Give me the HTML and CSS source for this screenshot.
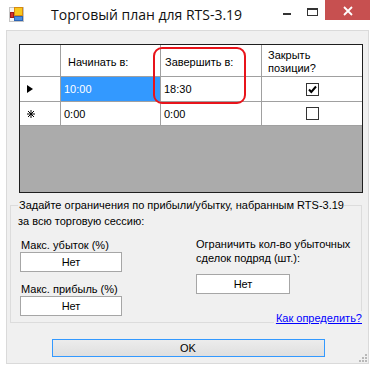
FILE: index.html
```html
<!DOCTYPE html>
<html lang="ru">
<head>
<meta charset="utf-8">
<title>Торговый план для RTS-3.19</title>
<link rel="stylesheet" href="styles.css">
</head>
<body>
<div class="window">
  <div class="titlebar">
    <svg class="app-icon" width="16" height="16" viewBox="0 0 16 16">
      <rect x="0.5" y="0.5" width="14" height="14" fill="#f4f4f4" stroke="#c4c4c4"/>
      <rect x="5.5" y="0.5" width="8" height="8" fill="#f7c81e" stroke="#d88a10"/>
      <rect x="1.5" y="5.5" width="3" height="5" fill="#d6302a" stroke="#9c1c18"/>
      <rect x="5.5" y="9.5" width="8" height="4" fill="#4b8ee0" stroke="#2c64b4"/>
    </svg>
    <span class="title">Торговый план для RTS-3.19</span>
    <div class="caption">
      <span class="cap-btn cap-min"><span class="min-glyph"></span></span>
      <span class="cap-btn cap-max"><span class="max-glyph"></span></span>
      <span class="cap-btn cap-close">
        <svg width="10" height="10" viewBox="0 0 10 10"><path d="M1 1 L9 9 M9 1 L1 9" stroke="#fff" stroke-width="1.8"/></svg>
      </span>
    </div>
  </div>
  <div class="client">
    <div class="grid">
      <div class="cell head rowhead"></div>
      <div class="cell head c1">Начинать в:</div>
      <div class="cell head c2">Завершить в:</div>
      <div class="cell head c3">Закрыть<br>позиции?</div>

      <div class="cell rowhead">
        <svg width="6" height="8" viewBox="0 0 6 8"><path d="M0 0 L6 4 L0 8 Z" fill="#000"/></svg>
      </div>
      <div class="cell data selected">10:00</div>
      <div class="cell data">18:30</div>
      <div class="cell check"><span class="checkbox checked">
        <svg width="11" height="11" viewBox="0 0 11 11"><path d="M2 5.5 L4.3 8 L9 2.5" fill="none" stroke="#000" stroke-width="2"/></svg>
      </span></div>

      <div class="cell rowhead">
        <svg width="8" height="8" viewBox="0 0 8 8"><path d="M4 0 V8 M0 4 H8 M1 1 L7 7 M7 1 L1 7" stroke="#000" stroke-width="1"/></svg>
      </div>
      <div class="cell data">0:00</div>
      <div class="cell data">0:00</div>
      <div class="cell check"><span class="checkbox"></span></div>

      <div class="empty"></div>
      <div class="highlight"></div>
    </div>

    <div class="group">
      <p class="group-title"><span>Задайте ограничения по прибыли/убытку, набранным RTS-3.19<br>за всю торговую сессию:</span></p>
      <div class="group-body">
        <div class="col-left">
          <div class="label">Макс. убыток (%)</div>
          <div class="textbox wide">Нет</div>
          <div class="label second">Макс. прибыль (%)</div>
          <div class="textbox wide">Нет</div>
        </div>
        <div class="col-right">
          <div class="label">Ограничить кол-во убыточных<br>сделок подряд (шт.):</div>
          <div class="textbox narrow">Нет</div>
        </div>
      </div>
      <a class="help-link" href="#">Как определить?</a>
    </div>

    <div class="footer">
      <button class="ok" type="button">OK</button>
    </div>
    <svg class="grip" width="8" height="8" viewBox="0 0 8 8">
      <rect x="6" y="0" width="2" height="2" fill="#b8b8b8"/>
      <rect x="3" y="3" width="2" height="2" fill="#b8b8b8"/>
      <rect x="6" y="3" width="2" height="2" fill="#b8b8b8"/>
      <rect x="0" y="6" width="2" height="2" fill="#b8b8b8"/>
      <rect x="3" y="6" width="2" height="2" fill="#b8b8b8"/>
      <rect x="6" y="6" width="2" height="2" fill="#b8b8b8"/>
    </svg>
  </div>
</div>
</body>
</html>
```

FILE: styles.css
```css
* { box-sizing: border-box; }
html, body { margin: 0; padding: 0; }
body {
  width: 372px;
  height: 368px;
  overflow: hidden;
  background: #ffffff;
  font-family: "Liberation Sans", Arial, sans-serif;
  font-size: 11px;
  color: #000;
}
.window { width: 372px; height: 368px; display: flex; flex-direction: column; }

/* title bar */
.titlebar { height: 30px; display: flex; align-items: flex-start; flex-shrink: 0; }
.app-icon { margin: 7px 0 0 9px; flex-shrink: 0; }
.title {
  margin: 5px 0 0 26px;
  font-family: "Open Sans", "Noto Sans", sans-serif;
  font-size: 14px;
  line-height: 20px;
  color: #111;
  white-space: nowrap;
}
.caption { margin-left: auto; margin-right: 2px; display: flex; }
.cap-btn { height: 20px; display: flex; justify-content: center; }
.cap-min { width: 25px; align-items: flex-start; }
.min-glyph { width: 8px; height: 2px; background: #333; margin-top: 13px; }
.cap-max { width: 26px; align-items: flex-start; }
.max-glyph { width: 11px; height: 8px; border: 1px solid #333; border-top-width: 2px; margin-top: 8px; }
.cap-close { width: 45px; background: #c75050; align-items: center; padding-top: 2px; }

/* client */
.client {
  margin-left: 6px;
  width: 363px;
  height: 334px;
  border: 1px solid #dadada;
  background: #f0f0f0;
  position: relative;
  display: flex;
  flex-direction: column;
}

/* data grid */
.grid {
  position: relative;
  margin: 13px 0 0 12px;
  width: 344px;
  height: 149px;
  border: 1px solid #1e1e1e;
  background: #ababab;
  display: grid;
  grid-template-columns: 41px 100px 101px 100px;
  grid-template-rows: 32px 25px 24px 1fr;
}
.cell {
  background: #fff;
  border-right: 1px solid #a0a0a0;
  border-bottom: 1px solid #a0a0a0;
  display: flex;
  align-items: center;
  white-space: nowrap;
}
.cell.c3, .cell.check { border-right: none; }
.head { padding-top: 3px; line-height: 13px; }
.head.c1 { padding-left: 7px; }
.head.c2 { padding-left: 4px; }
.head.c3 { padding-left: 6px; }
.rowhead { padding-left: 7px; }
.data { padding-left: 3px; }
.selected { background: #3399ff; color: #fff; }
.check { justify-content: center; }
.checkbox {
  width: 13px; height: 13px;
  border: 1px solid #333;
  background: #fff;
  display: flex; align-items: center; justify-content: center;
}
.empty { grid-column: 1 / -1; }
.highlight {
  position: absolute;
  left: 133px; top: 2px;
  width: 93px; height: 57px;
  border: 2px solid #e8141b;
  border-radius: 9px;
}

/* group box */
.group {
  position: relative;
  margin: 12px 0 0 3px;
  width: 352px;
  height: 118px;
  border: 1px solid #dcdcdc;
}
.group-title { margin: -9px 0 0 7px; line-height: 16px; }
.group-title span { background: #f0f0f0; padding: 0 1px; }
.group-body { display: flex; }
.col-left { margin-left: 9px; width: 102px; }
.col-right { margin-left: 74px; }
.label { line-height: 14px; padding-left: 1px; white-space: nowrap; }
.col-left .label { margin-top: 9px; }
.col-left .label.second { margin-top: 10px; }
.col-right .label { margin-top: 8px; padding-left: 0; }
.textbox {
  height: 20px;
  background: #fff;
  border: 1px solid #a6a6a6;
  display: flex; align-items: center; justify-content: center;
}
.wide { width: 102px; }
.narrow { width: 94px; margin-top: 9px; }
.help-link {
  position: absolute;
  right: -1px; top: 105px;
  line-height: 14px;
  padding-left: 2px;
  background: #f0f0f0;
  color: #0000ff;
  text-decoration: underline;
}

/* footer */
.footer { margin-top: 16px; display: flex; justify-content: center; }
.ok {
  width: 273px; height: 18px;
  border: 1px solid #3399ff;
  background: linear-gradient(#ececec, #dfdfdf);
  font-family: "Liberation Sans", Arial, sans-serif;
  font-size: 11px;
  color: #000;
  padding: 0;
  margin-left: 1px;
}
.grip { position: absolute; right: 1px; bottom: 1px; }
```
